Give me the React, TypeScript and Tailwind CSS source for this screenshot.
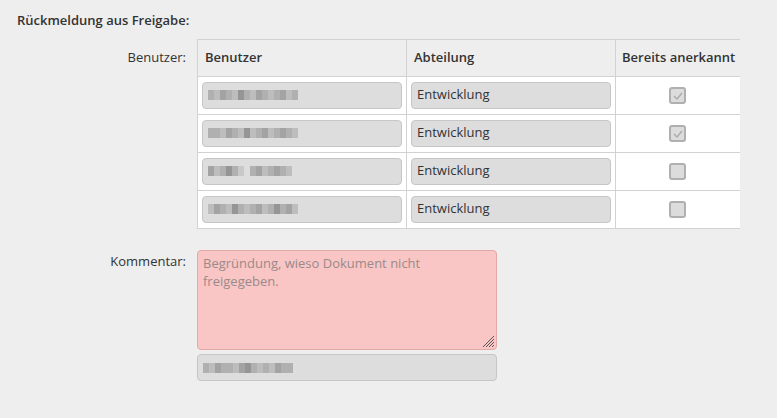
import React from 'react';

const users = [
  { blur: [3, 2, 4, 3, 2, 5, 3, 2, 4, 3, 2, 3, 4, 2, 3], checked: true },
  { blur: [3, 3, 2, 4, 3, 2, 5, 2, 3, 4, 2, 3, 4, 3, 2], checked: true },
  { blur: [4, 2, 3, 5, 3, 1, 0, 3, 4, 2, 3, 4, 3, 2], checked: false },
  { blur: [2, 4, 3, 2, 5, 3, 2, 3, 4, 2, 3, 5, 3, 4, 2], checked: false },
];

const grays = ['#d8d8d8', '#c8c8c8', '#bdbdbd', '#b0b0b0', '#a3a3a3', '#959595'];

function Blurred({ cells }: { cells: number[] }) {
  return (
    <div className="flex items-center h-[10px]">
      {cells.map((c, i) => (
        <span
          key={i}
          className="block w-[6px] h-[10px]"
          style={{ backgroundColor: c === 0 ? 'transparent' : grays[c] }}
        />
      ))}
    </div>
  );
}

function ReadonlyInput({ children }: { children: React.ReactNode }) {
  return (
    <div className="h-[27px] flex items-center px-[5px] rounded-[4px] border border-[#c6c6c6] bg-[#dddddd] text-[13px] text-[#333]">
      {children}
    </div>
  );
}

function Check({ checked }: { checked: boolean }) {
  return (
    <div className="w-[17px] h-[17px] mx-auto rounded-[3px] border-2 border-[#b0b0b0] bg-[#dcdcdc] flex items-center justify-center">
      {checked && (
        <svg width="10" height="8" viewBox="0 0 10 8">
          <path d="M1 4 L4 7 L9 1" fill="none" stroke="#aaaaaa" strokeWidth="1.4" />
        </svg>
      )}
    </div>
  );
}

export default function App() {
  return (
    <div className="w-[777px] h-[418px] bg-[#eeeeee] text-[#333] font-['Open_Sans',sans-serif] text-[13px]">
      <div className="pt-[11px] pl-[17px] font-semibold leading-[18px]">Rückmeldung aus Freigabe:</div>

      <div className="grid grid-cols-[186px_542px] gap-x-[11px] mt-[10px]">
        <div className="text-right pt-[9px] leading-[18px]">Benutzer:</div>
        <table className="border-collapse w-[542px] table-fixed">
          <colgroup>
            <col className="w-[209px]" />
            <col className="w-[209px]" />
            <col className="w-[124px]" />
          </colgroup>
          <thead>
            <tr className="h-[37px]">
              <th className="border border-[#d2d2d2] text-left font-semibold pl-[7px]">Benutzer</th>
              <th className="border border-[#d2d2d2] text-left font-semibold pl-[7px]">Abteilung</th>
              <th className="border-t border-b border-[#d2d2d2] text-left font-semibold pl-[6px] whitespace-nowrap">Bereits anerkannt</th>
            </tr>
          </thead>
          <tbody className="bg-white">
            {users.map((u, i) => (
              <tr key={i} className="h-[38px]">
                <td className="border border-[#d2d2d2] px-[4px] pt-[4px] pb-[5px]">
                  <ReadonlyInput>
                    <Blurred cells={u.blur} />
                  </ReadonlyInput>
                </td>
                <td className="border border-[#d2d2d2] px-[4px] pt-[4px] pb-[5px]">
                  <ReadonlyInput>Entwicklung</ReadonlyInput>
                </td>
                <td className="border-t border-b border-[#d2d2d2]">
                  <Check checked={u.checked} />
                </td>
              </tr>
            ))}
          </tbody>
        </table>

        <div className="text-right pt-[2px] mt-[21px] leading-[18px]">Kommentar:</div>
        <div className="mt-[21px] w-[300px] flex flex-col gap-[4px]">
          <div className="relative h-[100px] rounded-[4px] border border-[#e2a9a9] bg-[#f9c6c5] px-[5px] pt-[3px] leading-[18px] text-[#9a8a8a]">
            Begründung, wieso Dokument nicht freigegeben.
            <svg className="absolute right-[1px] bottom-[1px]" width="14" height="14" viewBox="0 0 14 14">
              <path d="M13 2 L2 13 M13 5 L5 13 M13 8 L8 13 M13 11 L11 13" stroke="#555" strokeWidth="1" />
            </svg>
          </div>
          <ReadonlyInput>
            <Blurred cells={[3, 2, 4, 3, 3, 2, 4, 5, 3, 2, 3, 2, 4, 3, 3]} />
          </ReadonlyInput>
        </div>
      </div>
    </div>
  );
}
